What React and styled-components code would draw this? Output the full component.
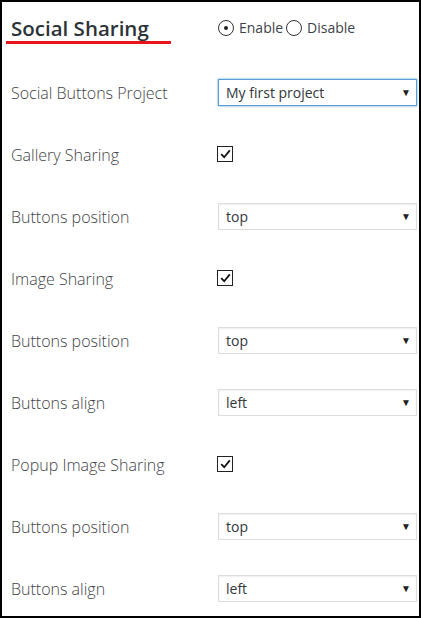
import React from 'react'
import styled, { createGlobalStyle } from 'styled-components'

const GlobalStyle = createGlobalStyle`
  html, body {
    margin: 0;
    padding: 0;
    background: #fff;
  }
  body {
    font-family: "Open Sans", "Noto Sans", sans-serif;
  }
`

const rows = [
  { label: 'Social Buttons Project', type: 'select', value: 'My first project', focused: true },
  { label: 'Gallery Sharing', type: 'check' },
  { label: 'Buttons position', type: 'select', value: 'top' },
  { label: 'Image Sharing', type: 'check' },
  { label: 'Buttons position', type: 'select', value: 'top' },
  { label: 'Buttons align', type: 'select', value: 'left' },
  { label: 'Popup Image Sharing', type: 'check' },
  { label: 'Buttons position', type: 'select', value: 'top' },
  { label: 'Buttons align', type: 'select', value: 'left' },
]

const App = () => {
  return (
    <>
      <GlobalStyle />
      <Panel>
        <Header>
          <Title>Social Sharing</Title>
          <RadioGroup>
            <RadioOption>
              <Radio checked />
              Enable
            </RadioOption>
            <RadioOption>
              <Radio />
              Disable
            </RadioOption>
          </RadioGroup>
        </Header>
        {rows.map((row, i) => (
          <Row key={i}>
            <Label>{row.label}</Label>
            {row.type === 'select' ? (
              <Select focused={row.focused}>
                {row.value}
                <Arrow>▼</Arrow>
              </Select>
            ) : (
              <Checkbox>
                <svg width="11" height="10" viewBox="0 0 11 10">
                  <path d="M1.2 5.2 L4.2 8.2 L9.8 1.4" fill="none" stroke="#111" strokeWidth="1.8" />
                </svg>
              </Checkbox>
            )}
          </Row>
        ))}
      </Panel>
    </>
  )
}

export default App

const Panel = styled.div`
  box-sizing: border-box;
  width: 421px;
  height: 618px;
  border: 2px solid #000;
  padding-left: 4px;
  overflow: hidden;
`

const Header = styled.div`
  display: flex;
  align-items: flex-start;
  height: 59px;
  box-sizing: border-box;
  padding-top: 13px;
`

const Title = styled.h2`
  box-sizing: border-box;
  width: 165px;
  margin: 0;
  padding: 0 0 0 5px;
  font-size: 20.5px;
  line-height: 26px;
  font-weight: 600;
  color: #2c3338;
  border-bottom: 3px solid #e8141e;
`

const RadioGroup = styled.div`
  display: flex;
  margin-left: 47px;
  gap: 3px;
  font-size: 14px;
  line-height: 26px;
  color: #3c434a;
`

const RadioOption = styled.label`
  display: flex;
  align-items: center;
  gap: 5px;
`

const Radio = styled.span`
  box-sizing: border-box;
  width: 16px;
  height: 16px;
  border: 1px solid #333;
  border-radius: 50%;
  display: flex;
  align-items: center;
  justify-content: center;
  &::after {
    content: '';
    display: ${(p) => (p.checked ? 'block' : 'none')};
    width: 4px;
    height: 4px;
    border-radius: 50%;
    background: #222;
  }
`

const Row = styled.div`
  display: flex;
  align-items: center;
  height: 62px;
  padding-left: 5px;
`

const Label = styled.div`
  width: 207px;
  flex-shrink: 0;
  padding-top: 1px;
  font-size: 16px;
  font-weight: 300;
  color: #3f4448;
`

const Select = styled.div`
  position: relative;
  box-sizing: border-box;
  width: 199px;
  height: 27px;
  padding-left: 7px;
  display: flex;
  align-items: center;
  font-size: 14px;
  color: #32373c;
  background: #fff;
  border: 1px solid ${(p) => (p.focused ? '#5b9dd9' : '#ddd')};
  box-shadow: ${(p) =>
    p.focused ? '0 0 2px rgba(30, 140, 190, 0.8)' : 'inset 0 1px 2px rgba(0, 0, 0, 0.07)'};
`

const Arrow = styled.span`
  position: absolute;
  right: 5px;
  top: 50%;
  transform: translateY(-50%);
  font-size: 10px;
  color: #222;
`

const Checkbox = styled.span`
  box-sizing: border-box;
  width: 16px;
  height: 16px;
  margin-left: -1px;
  border: 1px solid #222;
  display: flex;
  align-items: center;
  justify-content: center;
`
